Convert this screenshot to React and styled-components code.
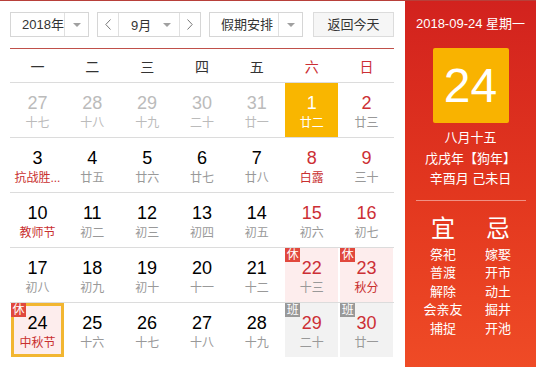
import React from "react";
import styled, { createGlobalStyle } from "styled-components";

const GlobalStyle = createGlobalStyle`
  body {
    margin: 0;
    background: #fff;
    font-family: "Liberation Sans", "Noto Sans CJK SC", sans-serif;
  }
`;

const Page = styled.div`
  display: flex;
  width: 536px;
  height: 367px;
  overflow: hidden;
  border-top: 1px solid #b8403a;
  box-sizing: border-box;
`;

const Left = styled.div`
  width: 384px;
  padding: 0 11px 0 10px;
`;

const Toolbar = styled.div`
  display: flex;
  height: 25px;
  margin-top: 11px;
`;

const Select = styled.div`
  display: flex;
  width: ${(props) => props.$width}px;
  margin-right: ${(props) => props.$gap}px;
  border: 1px solid #d6d6d6;
  box-sizing: border-box;
  background: #fff;
`;

const SelectText = styled.div`
  flex: 1;
  padding-left: 11px;
  font-size: 13px;
  line-height: 23px;
  color: #333;
`;

const ArrowCell = styled.div`
  width: 23px;
  border-left: 1px solid #e0e0e0;
  display: flex;
  align-items: center;
  justify-content: center;
`;

const Caret = styled.span`
  width: 0;
  height: 0;
  border-left: 4px solid transparent;
  border-right: 4px solid transparent;
  border-top: 4px solid #a0a0a0;
`;

const NavBtn = styled.div`
  width: 20px;
  display: flex;
  align-items: center;
  justify-content: center;
  border-right: ${(props) => (props.$side === "left" ? "1px solid #e0e0e0" : "none")};
  border-left: ${(props) => (props.$side === "right" ? "1px solid #e0e0e0" : "none")};
`;

const MonthLabel = styled.div`
  flex: 1;
  display: flex;
  align-items: center;
  justify-content: space-between;
  padding: 0 8px 0 12px;
  font-size: 13px;
  color: #333;
`;

const TodayButton = styled.div`
  width: 81px;
  border: 1px solid #dcdcdc;
  box-sizing: border-box;
  background: #f6f6f6;
  text-align: center;
  font-size: 13px;
  line-height: 23px;
  color: #333;
`;

const RedLine = styled.div`
  height: 1px;
  margin-top: 11px;
  background: #c0504a;
`;

const WeekHeader = styled.div`
  display: grid;
  grid-template-columns: repeat(7, 1fr);
  height: 33px;
  align-items: center;
  text-align: center;
  font-size: 14px;
`;

const WeekName = styled.div`
  color: ${(props) => (props.$weekend ? "#cc2f35" : "#333")};
`;

const Row = styled.div`
  display: grid;
  grid-template-columns: repeat(7, 1fr);
  height: 55px;
  border-top: 1px solid #dcdcdc;
  box-sizing: border-box;
`;

const cellBg = {
  prev: "transparent",
  normal: "transparent",
  highlight: "#f9b600",
  rest: "#fdeded",
  work: "#f2f2f2",
};

const Cell = styled.div`
  position: relative;
  margin: 0 1px;
  padding-top: 9px;
  box-sizing: border-box;
  text-align: center;
  background: ${(props) => cellBg[props.$tone]};
  box-shadow: ${(props) => (props.$today ? "inset 0 0 0 3px #f2b631" : "none")};
  min-width: 0;
`;

const DayNum = styled.div`
  font-size: 18px;
  line-height: 22px;
  color: ${(props) => props.$color};
`;

const Lunar = styled.div`
  font-size: 12px;
  line-height: 18px;
  white-space: nowrap;
  color: ${(props) => props.$color};
`;

const Badge = styled.span`
  position: absolute;
  top: 0;
  left: 0;
  width: 15px;
  height: 14px;
  font-size: 12px;
  line-height: 14px;
  text-align: center;
  color: #fff;
  background: ${(props) => (props.$kind === "休" ? "#e1483d" : "#999")};
`;

const Right = styled.div`
  flex: 1;
  display: flex;
  flex-direction: column;
  align-items: center;
  padding-top: 15px;
  color: #fff;
  background: linear-gradient(180deg, #d2221e 0%, #e3381f 55%, #ef4b26 100%);
`;

const DateLine = styled.div`
  font-size: 13px;
  line-height: 16px;
`;

const BigDay = styled.div`
  width: 76px;
  height: 75px;
  margin-top: 16px;
  border-radius: 2px;
  background: #f9b300;
  font-size: 48px;
  line-height: 75px;
  text-align: center;
`;

const LunarInfo = styled.div`
  margin-top: 5px;
  font-size: 13px;
  line-height: 20.5px;
  text-align: center;
`;

const Divider = styled.div`
  width: 110px;
  height: 1px;
  margin-top: 10px;
  background: rgba(255, 255, 255, 0.45);
`;

const YiJi = styled.div`
  display: grid;
  grid-template-columns: 55px 55px;
  margin-top: 14px;
  text-align: center;
`;

const YiJiTitle = styled.div`
  font-size: 24px;
  line-height: 28px;
  margin-bottom: 3px;
`;

const YiJiItem = styled.div`
  font-size: 13px;
  line-height: 18.5px;
`;

const Chevron = ({ dir }) => (
  <svg width="6" height="11" viewBox="0 0 6 11">
    <polyline
      points={dir === "left" ? "5.5,0.5 0.8,5.5 5.5,10.5" : "0.5,0.5 5.2,5.5 0.5,10.5"}
      fill="none"
      stroke="#777"
      strokeWidth="1"
    />
  </svg>
);

const weeks = [
  [
    { d: 27, l: "十七", tone: "prev" },
    { d: 28, l: "十八", tone: "prev" },
    { d: 29, l: "十九", tone: "prev" },
    { d: 30, l: "二十", tone: "prev" },
    { d: 31, l: "廿一", tone: "prev" },
    { d: 1, l: "廿二", tone: "highlight" },
    { d: 2, l: "廿三" },
  ],
  [
    { d: 3, l: "抗战胜...", fest: true },
    { d: 4, l: "廿五" },
    { d: 5, l: "廿六" },
    { d: 6, l: "廿七" },
    { d: 7, l: "廿八" },
    { d: 8, l: "白露", fest: true },
    { d: 9, l: "三十" },
  ],
  [
    { d: 10, l: "教师节", fest: true },
    { d: 11, l: "初二" },
    { d: 12, l: "初三" },
    { d: 13, l: "初四" },
    { d: 14, l: "初五" },
    { d: 15, l: "初六" },
    { d: 16, l: "初七" },
  ],
  [
    { d: 17, l: "初八" },
    { d: 18, l: "初九" },
    { d: 19, l: "初十" },
    { d: 20, l: "十一" },
    { d: 21, l: "十二" },
    { d: 22, l: "十三", tone: "rest", mark: "休" },
    { d: 23, l: "秋分", tone: "rest", mark: "休", fest: true },
  ],
  [
    { d: 24, l: "中秋节", tone: "rest", mark: "休", fest: true, today: true },
    { d: 25, l: "十六" },
    { d: 26, l: "十七" },
    { d: 27, l: "十八" },
    { d: 28, l: "十九" },
    { d: 29, l: "二十", tone: "work", mark: "班" },
    { d: 30, l: "廿一", tone: "work", mark: "班" },
  ],
];

const weekNames = ["一", "二", "三", "四", "五", "六", "日"];

const RED = "#cc2f35";

const numColor = (c, col) => {
  if (c.tone === "prev") return "#bbb";
  if (c.tone === "highlight") return "#fff";
  if (col >= 5) return RED;
  return "#000";
};

const lunarColor = (c) => {
  if (c.tone === "prev") return "#bbb";
  if (c.tone === "highlight") return "#fff";
  if (c.fest) return "#c9302f";
  return "#999";
};

const yi = ["祭祀", "普渡", "解除", "会亲友", "捕捉"];
const ji = ["嫁娶", "开市", "动土", "掘井", "开池"];

export default function App() {
  return (
    <>
      <GlobalStyle />
      <Page>
        <Left>
          <Toolbar>
            <Select $width={79} $gap={8}>
              <SelectText>2018年</SelectText>
              <ArrowCell>
                <Caret />
              </ArrowCell>
            </Select>
            <Select $width={104} $gap={8}>
              <NavBtn $side="left">
                <Chevron dir="left" />
              </NavBtn>
              <MonthLabel>
                <span>9月</span>
                <Caret />
              </MonthLabel>
              <NavBtn $side="right">
                <Chevron dir="right" />
              </NavBtn>
            </Select>
            <Select $width={94} $gap={10}>
              <SelectText>假期安排</SelectText>
              <ArrowCell>
                <Caret />
              </ArrowCell>
            </Select>
            <TodayButton>返回今天</TodayButton>
          </Toolbar>
          <RedLine />
          <WeekHeader>
            {weekNames.map((n, i) => (
              <WeekName key={n} $weekend={i >= 5}>
                {n}
              </WeekName>
            ))}
          </WeekHeader>
          {weeks.map((week, r) => (
            <Row key={r}>
              {week.map((c, i) => (
                <Cell key={i} $tone={c.tone || "normal"} $today={c.today}>
                  {c.mark && <Badge $kind={c.mark}>{c.mark}</Badge>}
                  <DayNum $color={numColor(c, i)}>{c.d}</DayNum>
                  <Lunar $color={lunarColor(c)}>{c.l}</Lunar>
                </Cell>
              ))}
            </Row>
          ))}
        </Left>
        <Right>
          <DateLine>2018-09-24 星期一</DateLine>
          <BigDay>24</BigDay>
          <LunarInfo>
            <div>八月十五</div>
            <div>戊戌年【狗年】</div>
            <div>辛酉月 己未日</div>
          </LunarInfo>
          <Divider />
          <YiJi>
            <div>
              <YiJiTitle>宜</YiJiTitle>
              {yi.map((t) => (
                <YiJiItem key={t}>{t}</YiJiItem>
              ))}
            </div>
            <div>
              <YiJiTitle>忌</YiJiTitle>
              {ji.map((t) => (
                <YiJiItem key={t}>{t}</YiJiItem>
              ))}
            </div>
          </YiJi>
        </Right>
      </Page>
    </>
  );
}
